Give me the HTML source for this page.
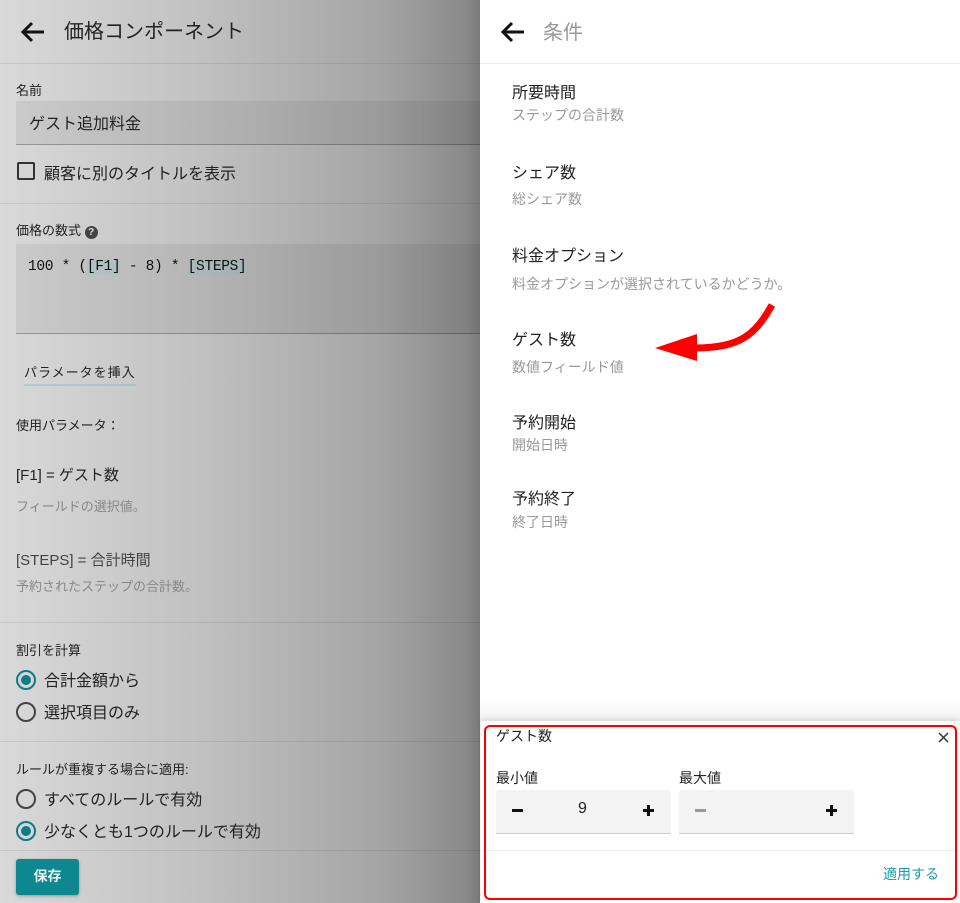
<!DOCTYPE html>
<html><head><meta charset="utf-8"><style>
*{margin:0;padding:0;box-sizing:border-box}
body{width:960px;height:903px;overflow:hidden;position:relative;font-family:"Liberation Sans","Noto Sans CJK JP",sans-serif;background:#fff;color:#222}
.a{position:absolute;white-space:nowrap}
#left{position:absolute;left:0;top:0;width:480px;height:903px;background:linear-gradient(90deg,#d9d9d9 0%,#c2c2c2 40%,#a4a4a4 80%,#8a8a8a 97%,#7a7a7a 100%)}
.hr{position:absolute;left:0;width:480px;height:1px;background:rgba(0,0,0,0.08)}
.f{position:absolute;left:16px;width:464px;background:rgba(0,0,0,0.06);border-bottom:1px solid rgba(0,0,0,0.25)}
.rad{position:absolute;left:16px;width:20px;height:20px;border:2px solid #444;border-radius:50%}
.rad.on{border-color:#0e7c86}
.rad.on:after{content:"";position:absolute;left:3px;top:3px;width:10px;height:10px;border-radius:50%;background:#0e7c86}
.t{font-size:16px}
.s{font-size:14px;color:#999}
</style></head><body>
<div id="left">
<svg class="a" style="left:20px;top:20px" width="26" height="24" viewBox="0 0 26 24"><path d="M24 12H4M12 3L3 12l9 9" fill="none" stroke="#111" stroke-width="3"/></svg>
<div class="a" style="left:64px;top:15px;font-size:20px;color:#222">価格コンポーネント</div>
<div class="hr" style="top:63px"></div>
<div class="a" style="left:16px;top:80px;font-size:13px">名前</div>
<div class="f" style="top:101px;height:44px"></div>
<div class="a" style="left:29px;top:110px;font-size:16px">ゲスト追加料金</div>
<div class="a" style="left:17px;top:162px;width:18px;height:18px;border:2px solid #333;border-radius:2px"></div>
<div class="a" style="left:44px;top:160px;font-size:16px">顧客に別のタイトルを表示</div>
<div class="hr" style="top:203px"></div>
<div class="a" style="left:16px;top:220px;font-size:13px">価格の数式 <span style="display:inline-block;width:13px;height:13px;border-radius:50%;background:#444;color:#ddd;font-size:10px;text-align:center;line-height:13px;font-weight:bold">?</span></div>
<div class="f" style="top:244px;height:90px"></div>
<div class="a" style="left:28px;top:259px;font-family:'Liberation Mono',monospace;font-size:14.5px;letter-spacing:-0.3px;color:#111">100 * (<span style="background:rgba(120,200,200,0.2)">[F1]</span> - 8) * <span style="background:rgba(120,200,200,0.2)">[STEPS]</span></div>
<div class="a" style="left:24px;top:362px;font-size:13px;letter-spacing:1px;border-bottom:2px solid rgba(100,190,200,0.35);padding-bottom:3px">パラメータを挿入</div>
<div class="a" style="left:16px;top:415px;font-size:13px">使用パラメータ：</div>
<div class="a" style="left:16px;top:464px;font-size:15px">[F1] = ゲスト数</div>
<div class="a" style="left:16px;top:496px;font-size:13px;color:#888">フィールドの選択値。</div>
<div class="a" style="left:16px;top:549px;font-size:15px;color:#444">[STEPS] = 合計時間</div>
<div class="a" style="left:16px;top:576px;font-size:13px;color:#888">予約されたステップの合計数。</div>
<div class="hr" style="top:622px"></div>
<div class="a" style="left:16px;top:640px;font-size:13px">割引を計算</div>
<div class="rad on" style="top:670px"></div>
<div class="a" style="left:44px;top:667px;font-size:16px">合計金額から</div>
<div class="rad" style="top:702px"></div>
<div class="a" style="left:44px;top:699px;font-size:16px">選択項目のみ</div>
<div class="hr" style="top:741px"></div>
<div class="a" style="left:16px;top:759px;font-size:13px">ルールが重複する場合に適用:</div>
<div class="rad" style="top:789px"></div>
<div class="a" style="left:44px;top:786px;font-size:16px">すべてのルールで有効</div>
<div class="rad on" style="top:821px"></div>
<div class="a" style="left:44px;top:818px;font-size:16px">少なくとも1つのルールで有効</div>
<div class="hr" style="top:850px"></div>
<div class="a" style="left:16px;top:859px;width:63px;height:36px;background:#0e8890;border-radius:3px;color:#e8f4f4;font-size:14px;font-weight:bold;text-align:center;line-height:34px;box-shadow:0 1px 3px rgba(0,0,0,0.3)">保存</div>
</div>

<svg class="a" style="left:500px;top:20px" width="26" height="24" viewBox="0 0 26 24"><path d="M24 12H4M12 3L3 12l9 9" fill="none" stroke="#111" stroke-width="3"/></svg>
<div class="a" style="left:543px;top:16px;font-size:20px;color:#999">条件</div>
<div class="a" style="left:480px;top:63px;width:480px;height:1px;background:#eee"></div>
<div class="a t" style="left:512px;top:79px">所要時間</div>
<div class="a s" style="left:512px;top:105px">ステップの合計数</div>
<div class="a t" style="left:512px;top:159px">シェア数</div>
<div class="a s" style="left:512px;top:189px">総シェア数</div>
<div class="a t" style="left:512px;top:242px">料金オプション</div>
<div class="a s" style="left:512px;top:274px">料金オプションが選択されているかどうか。</div>
<div class="a t" style="left:512px;top:326px">ゲスト数</div>
<div class="a s" style="left:512px;top:357px">数値フィールド値</div>
<div class="a t" style="left:512px;top:409px">予約開始</div>
<div class="a s" style="left:512px;top:435px">開始日時</div>
<div class="a t" style="left:512px;top:485px">予約終了</div>
<div class="a s" style="left:512px;top:512px">終了日時</div>

<svg class="a" style="left:640px;top:290px" width="150" height="80" viewBox="0 0 150 80"><path d="M132 15 C115 45 100 58 55 58" fill="none" stroke="#f00" stroke-width="7"/><path d="M15 58 L57 44 L57 71 Z" fill="#f00"/></svg>

<div class="a" style="left:480px;top:700px;width:480px;height:22px;background:linear-gradient(#fff,#f2f2f2)"></div>
<div class="a" style="left:481px;top:721px;width:479px;height:182px;background:#fff;box-shadow:0 -2px 6px rgba(0,0,0,0.12)"></div>
<div class="a" style="left:484px;top:725px;width:473px;height:175px;border:2px solid #f00;border-radius:6px"></div>
<div class="a" style="left:496px;top:726px;font-size:14px">ゲスト数</div>
<svg class="a" style="left:938px;top:732px" width="11" height="11" viewBox="0 0 11 11"><path d="M1 1L10 10M10 1L1 10" stroke="#333" stroke-width="1.5"/></svg>
<div class="a" style="left:496px;top:768px;font-size:14px">最小値</div>
<div class="a" style="left:679px;top:768px;font-size:14px">最大値</div>
<div class="a" style="left:496px;top:790px;width:175px;height:44px;background:#f3f3f3;border-bottom:1px solid #ccc;border-radius:3px 3px 0 0"></div>
<div class="a" style="left:679px;top:790px;width:175px;height:44px;background:#f3f3f3;border-bottom:1px solid #ccc;border-radius:3px 3px 0 0"></div>
<div class="a" style="left:512px;top:809px;width:11px;height:3px;background:#111"></div>
<div class="a" style="left:578px;top:800px;font-size:16px">9</div>
<div class="a" style="left:643px;top:809px;width:11px;height:3px;background:#111"></div><div class="a" style="left:647px;top:805px;width:3px;height:11px;background:#111"></div>
<div class="a" style="left:695px;top:809px;width:11px;height:3px;background:#999"></div>
<div class="a" style="left:826px;top:809px;width:11px;height:3px;background:#111"></div><div class="a" style="left:830px;top:805px;width:3px;height:11px;background:#111"></div>
<div class="a" style="left:486px;top:850px;width:469px;height:1px;background:#eee"></div>
<div class="a" style="left:883px;top:864px;font-size:14px;color:#1a9aaa">適用する</div>
</body></html>
